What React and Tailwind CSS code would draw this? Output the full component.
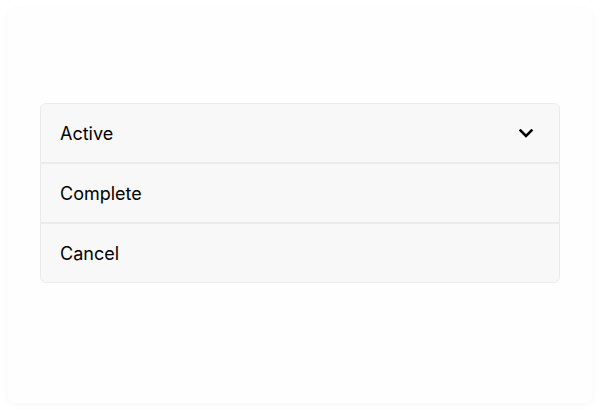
import React from 'react';

const items = ['Active', 'Complete', 'Cancel'];

function Chevron() {
    return (
        <svg width="14" height="9" viewBox="0 0 14 9" fill="none" className="text-black">
            <path d="M1.5 1.5l5.5 5.5 5.5-5.5" stroke="currentColor" strokeWidth="2.5" strokeLinecap="square" />
        </svg>
    );
}

export default function App() {
    return (
        <div className="min-h-screen bg-white p-2 font-['Inter',sans-serif]">
            <div className="h-[395px] rounded-lg bg-[#fefefe] shadow-[0_2px_10px_rgba(0,0,0,0.035)] px-8 pt-[95px]">
                <div className="rounded-md border border-[#ebebeb] bg-[#f8f8f8] overflow-hidden">
                    {items.map((label, i) => (
                        <div
                            key={label}
                            className={`flex items-center justify-between pl-[19px] pr-[26px] ${i > 0 ? 'h-[60px] border-t-2 border-[#ebebeb]' : 'h-[58px]'}`}
                        >
                            <span className="text-[18px] font-normal text-black">{label}</span>
                            {i === 0 && <Chevron />}
                        </div>
                    ))}
                </div>
            </div>
        </div>
    );
}
